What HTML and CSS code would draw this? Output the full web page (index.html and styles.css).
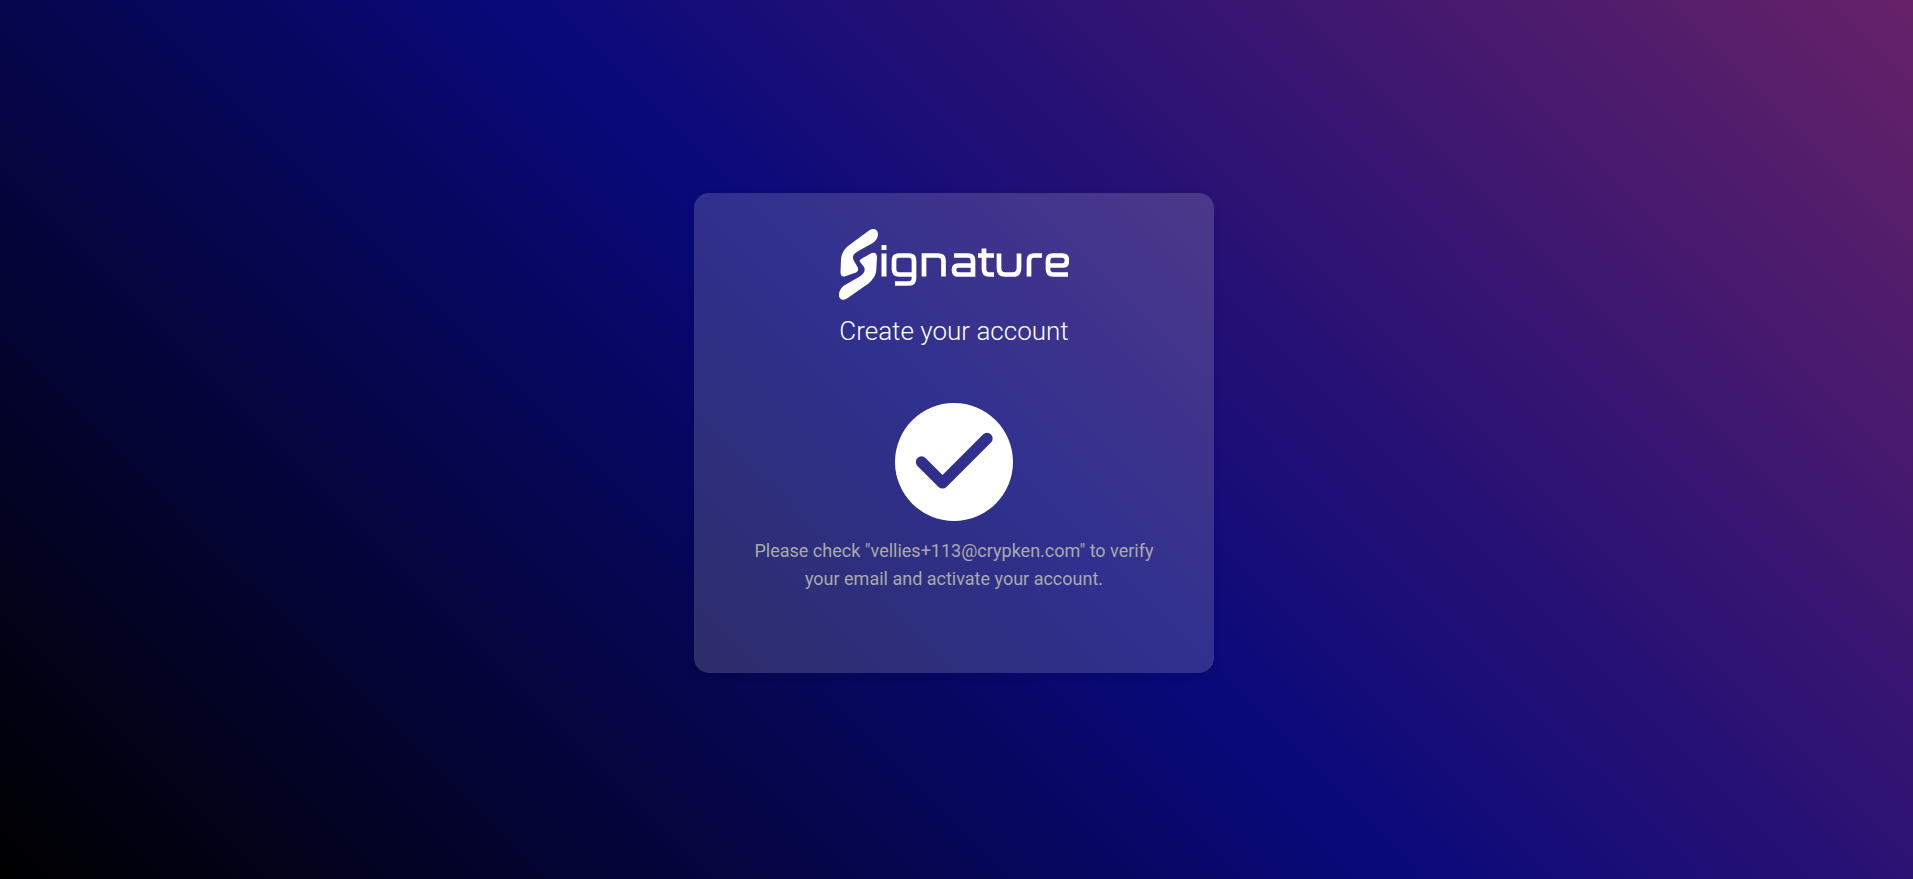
FILE: index.html
```
<!DOCTYPE html>
<html lang="en">
<head>
<meta charset="utf-8">
<title>Signature – Create your account</title>
<link rel="stylesheet" href="styles.css">
</head>
<body>
<main class="page">
  <section class="card">
    <svg class="logo" viewBox="0 0 230 71" role="img" aria-label="Signature">
      <g fill="#fff">
        <path d="M30 1.500C34-1.500 39 0 39 5C39 9 37 12 33 14.500L22 20.500C16 24 14 25.500 14 28.500C14 31 16 33.500 18 37C20 40 19.500 42 17 43.500L7 47C3 48.500 1.500 46.500 1.500 43L2 30C2.300 25 5 20.500 9 17Z"/>
        <path d="M31 25C35 22.500 38 24 38 28.500L37.300 41C37 46 34 50.500 29.500 54.500L8 69.500C4 72 0 70.500 0 66.500C0 61.500 2.500 58 6 56L19 48.500C24.500 45 27 42 25 38L21.500 33.500C20 32 20.500 31 22 30Z"/>
        <rect x="42.500" y="16" width="5" height="5"/>
        <rect x="42.500" y="24.500" width="5" height="23"/>
      </g>
      <g fill="none" stroke="#fff" stroke-width="4.700">
        <path d="M75 45.500H60Q55 45.500 55 40V32Q55 26.500 60 26.500H70Q75 26.500 75 32V49Q75 54.500 70 54.500H56"/>
        <path d="M85 47.500V26.500H99Q104.500 26.500 104.500 32V47.500"/>
        <path d="M115 26.500H129Q134 26.500 134 32V45.500H119Q115 45.500 115 41Q115 36.500 119 36.500H134"/>
        <path d="M145 19.500V40Q145 45.500 150 45.500H155M139 26.500H155"/>
        <path d="M160 24.500V39Q160 45.500 166 45.500H174Q180 45.500 180 39V24.500"/>
        <path d="M190 47.500V32Q190 26.500 195 26.500H203"/>
        <path d="M229 45.500H214Q209 45.500 209 40V32Q209 26.500 214 26.500H223Q228 26.500 228 31.500Q228 36.500 224 36.500H209"/>
      </g>
    </svg>
    <h1 class="title">Create your account</h1>
    <svg class="check" viewBox="0 0 118 118" aria-hidden="true">
      <path fill="#fff" fill-rule="evenodd" d="M59 0A59 59 0 1 1 59 118A59 59 0 1 1 59 0ZM88 31.500L47.500 72L30.500 55A5.400 5.400 0 0 0 22.500 63L43.500 84Q47.500 87 51.500 84L96 39.500A5.400 5.400 0 0 0 88 31.500Z"/>
    </svg>
    <p class="message">Please check "vellies+113@crypken.com" to verify your email and activate your account.</p>
  </section>
</main>
</body>
</html>
```
FILE: styles.css
```
* { box-sizing: border-box; }
body {
  margin: 0;
  font-family: Roboto, "Liberation Sans", sans-serif;
}
.page {
  min-height: 100vh;
  display: flex;
  align-items: center;
  justify-content: center;
  padding: 0 5px 13px 0;
  background: linear-gradient(45deg, #000000, #09097a, #662268);
}
.card {
  width: 100%;
  max-width: 520px;
  padding: 36px 56px 80px;
  display: flex;
  flex-direction: column;
  align-items: center;
  border-radius: 15px;
  background: rgba(255, 255, 255, 0.16);
  box-shadow: 0 2px 8px rgba(0, 0, 0, 0.1);
}
.logo {
  width: 230px;
  height: 71px;
}
.title {
  margin: 13px 0 0;
  font-size: 26px;
  line-height: 36px;
  font-weight: 300;
  color: #ffffff;
}
.check {
  width: 118px;
  height: 118px;
  margin-top: 54px;
}
.message {
  margin: 16px 0 0;
  font-size: 18px;
  line-height: 28px;
  text-align: center;
  color: #aaaaaa;
}
```
